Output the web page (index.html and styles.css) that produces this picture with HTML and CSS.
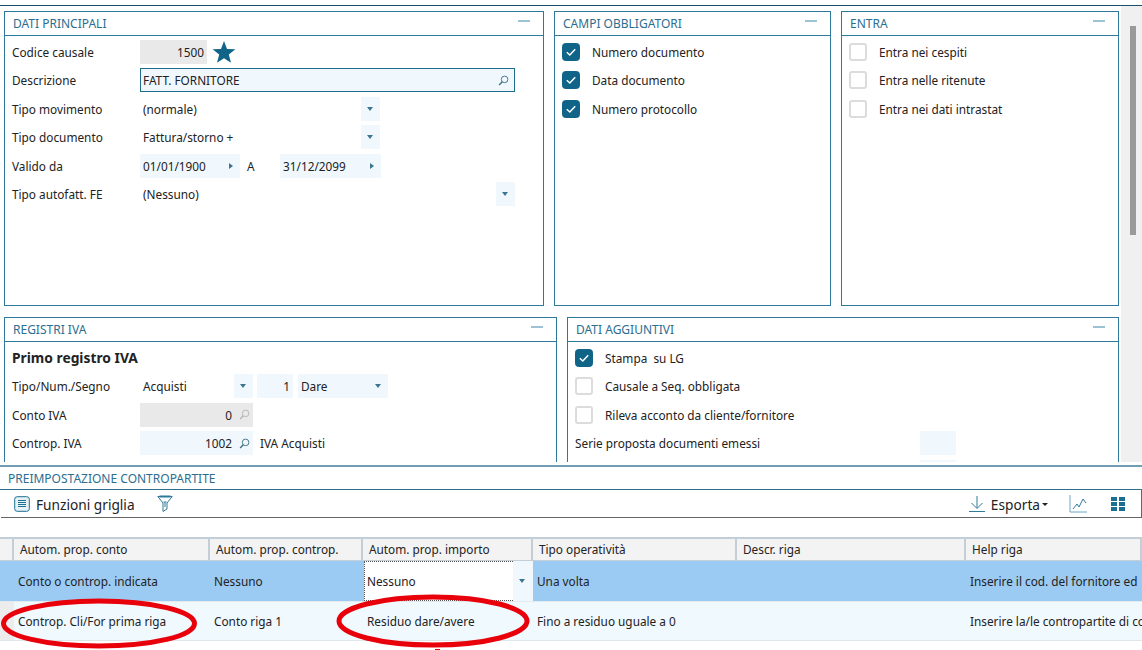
FILE: index.html
```html
<!DOCTYPE html>
<html lang="it">
<head>
<meta charset="utf-8">
<title>Causale</title>
<link rel="stylesheet" href="styles.css">
</head>
<body>
<svg class="defs" width="0" height="0" aria-hidden="true">
  <symbol id="lens" viewBox="0 0 12 12"><circle cx="7.2" cy="4.8" r="3.6" fill="none" stroke="currentColor" stroke-width="1"/><path d="M4.7 7.3 1.2 10.8" stroke="currentColor" stroke-width="1.5" fill="none"/></symbol>
  <symbol id="check" viewBox="0 0 18 18"><rect x=".5" y=".5" width="17" height="17" rx="3" fill="#0f6487" stroke="#0f6487"/><path d="M4.8 9.2 7.8 12 13.2 6.2" fill="none" stroke="#fff" stroke-width="1.5"/></symbol>
</svg>
<div class="page">
  <div class="upper">
    <div class="content">
      <div class="row-one">
        <section class="panel panel-main">
          <header class="panel-title"><span>DATI PRINCIPALI</span><i class="collapse"></i></header>
          <div class="panel-body">
            <div class="frow"><label>Codice causale</label><div class="field grey num w67">1500</div>
              <svg class="star" viewBox="0 0 24 24"><path d="M12 1 15 8.9 23.4 9.3 16.8 14.6 19 22.8 12 18.2 5 22.8 7.2 14.6 .6 9.3 9 8.9Z" fill="#0f6487"/></svg></div>
            <div class="frow"><label>Descrizione</label><div class="field focus w375"><span class="grow">FATT. FORNITORE</span><svg class="lens"><use href="#lens"/></svg></div></div>
            <div class="frow"><label>Tipo movimento</label><div class="select w240"><span class="grow">(normale)</span><b class="drop"></b></div></div>
            <div class="frow"><label>Tipo documento</label><div class="select w240"><span class="grow">Fattura/storno +</span><b class="drop"></b></div></div>
            <div class="frow"><label>Valido da</label><div class="field w100"><span class="grow">01/01/1900</span><b class="next"></b></div><span class="date-a">A</span><div class="field w101"><span class="grow">31/12/2099</span><b class="next"></b></div></div>
            <div class="frow"><label>Tipo autofatt. FE</label><div class="select w375"><span class="grow">(Nessuno)</span><b class="drop"></b></div></div>
          </div>
        </section>
        <section class="panel panel-side">
          <header class="panel-title"><span>CAMPI OBBLIGATORI</span><i class="collapse"></i></header>
          <div class="panel-body">
            <div class="frow"><svg class="cb"><use href="#check"/></svg>Numero documento</div>
            <div class="frow"><svg class="cb"><use href="#check"/></svg>Data documento</div>
            <div class="frow"><svg class="cb"><use href="#check"/></svg>Numero protocollo</div>
          </div>
        </section>
        <section class="panel panel-side wide">
          <header class="panel-title"><span>ENTRA</span><i class="collapse"></i></header>
          <div class="panel-body">
            <div class="frow"><i class="cb off"></i>Entra nei cespiti</div>
            <div class="frow"><i class="cb off"></i>Entra nelle ritenute</div>
            <div class="frow"><i class="cb off"></i>Entra nei dati intrastat</div>
          </div>
        </section>
      </div>
      <div class="row-two">
        <section class="panel panel-reg">
          <header class="panel-title"><span>REGISTRI IVA</span><i class="collapse"></i></header>
          <div class="panel-body">
            <div class="frow heading">Primo registro IVA</div>
            <div class="frow"><label>Tipo/Num./Segno</label><div class="select w113"><span class="grow">Acquisti</span><b class="drop"></b></div><div class="field num w36 gap4">1</div><div class="select filled w90 gap5"><span class="grow">Dare</span><b class="drop"></b></div></div>
            <div class="frow"><label>Conto IVA</label><div class="field grey w113"><span class="grow right">0</span><svg class="lens dim"><use href="#lens"/></svg></div></div>
            <div class="frow"><label>Controp. IVA</label><div class="field w113"><span class="grow right">1002</span><svg class="lens"><use href="#lens"/></svg></div><span class="after">IVA Acquisti</span></div>
          </div>
        </section>
        <section class="panel panel-add">
          <header class="panel-title"><span>DATI AGGIUNTIVI</span><i class="collapse"></i></header>
          <div class="panel-body">
            <div class="frow"><svg class="cb"><use href="#check"/></svg>Stampa&nbsp; su LG</div>
            <div class="frow"><i class="cb off"></i>Causale a Seq. obbligata</div>
            <div class="frow"><i class="cb off"></i>Rileva acconto da cliente/fornitore</div>
            <div class="frow"><label class="serie">Serie proposta documenti emessi</label><div class="field w36"></div></div>
            <div class="frow"><label class="serie"></label><div class="field w36"></div></div>
          </div>
        </section>
      </div>
    </div>
    <div class="scrollbar"><div class="thumb"></div></div>
  </div>
  <div class="sub-title">PREIMPOSTAZIONE CONTROPARTITE</div>
  <div class="toolbar">
    <svg class="tool-list" viewBox="0 0 16 16"><rect x=".7" y=".7" width="14.6" height="14.6" rx="2.5" fill="#e5f2f8" stroke="#1d6f91"/><path d="M4 4.5h8M4 6.5h8M4 8.5h8M4 10.5h8" stroke="#1d6f91"/></svg>
    <span class="tool-label">Funzioni griglia</span>
    <svg class="tool-filter" viewBox="0 0 16 18"><path d="M.8 1.5h14.4L10 8v6l-4 2.5V8Z" fill="none" stroke="#2f7a9b"/><path d="M2.5 1.5h11" stroke="#2f7a9b" stroke-width="2"/><path d="M6.5 7h3M8 7v5" stroke="#2f7a9b"/></svg>
    <span class="tool-space"></span>
    <svg class="tool-down" viewBox="0 0 18 18"><path d="M9 1v12M3.5 8 9 13.5 14.5 8" fill="none" stroke="#2f7a9b"/><path d="M1 16.5h16" stroke="#2f7a9b"/></svg>
    <span class="tool-label export">Esporta</span><b class="caret"></b>
    <svg class="tool-chart" viewBox="0 0 18 18"><path d="M1 0v17h17" fill="none" stroke="#6aa6c0"/><path d="M4 14 8 9 10 12 14 4 17 8" fill="none" stroke="#2f7a9b"/></svg>
    <svg class="tool-grid" viewBox="0 0 14 14"><path d="M0 0h6v4H0ZM8 0h6v4H8ZM0 5h6v4H0ZM8 5h6v4H8ZM0 10h6v4H0ZM8 10h6v4H8Z" fill="#1d6f91"/></svg>
  </div>
  <div class="grid">
    <div class="grow-row head">
      <div class="c0"></div><div>Autom. prop. conto</div><div>Autom. prop. controp.</div><div>Autom. prop. importo</div><div>Tipo operatività</div><div>Descr. riga</div><div>Help riga</div>
    </div>
    <div class="grow-row selected">
      <div class="c0"></div><div>Conto o controp. indicata</div><div>Nessuno</div><div class="editor"><span class="grow">Nessuno</span><b class="drop"></b></div><div>Una volta</div><div></div><div>Inserire il cod. del fornitore ed</div>
    </div>
    <div class="grow-row plain">
      <div class="c0"></div><div>Controp. Cli/For prima riga</div><div>Conto riga 1</div><div>Residuo dare/avere</div><div>Fino a residuo uguale a 0</div><div></div><div>Inserire la/le contropartite di co</div>
    </div>
  </div>
  <svg class="marks" viewBox="0 0 1142 650" aria-hidden="true">
    <ellipse cx="99" cy="623.5" rx="95.5" ry="22.5" fill="none" stroke="#e8000b" stroke-width="5"/>
    <ellipse cx="433" cy="621" rx="94" ry="24" fill="none" stroke="#e8000b" stroke-width="5"/>
    <path d="M435 649h5v1h-5z" fill="#e8000b"/>
  </svg>
</div>
</body>
</html>
```
FILE: styles.css
```css
* { box-sizing: border-box; }
html, body { margin: 0; padding: 0; background: #fff; }
body { font: 11.8px/16px "Noto Sans", Tahoma, sans-serif; color: #222; overflow: hidden; }
.defs { position: absolute; }
.page { position: relative; width: 1142px; height: 650px; overflow: hidden; padding-top: 5px; }

.upper { display: flex; height: 457px; border-top: 1px solid #1d5068; overflow: hidden; margin-bottom: 3px; }
.content { flex: 1; min-width: 0; padding: 5px 2px 0 4px; overflow: hidden; }
.scrollbar { width: 21px; background: #f0f0f0; padding: 20px 6px 0 9px; }
.thumb { height: 209px; background: #9a9a9a; }

.row-one { display: flex; gap: 10px; height: 295px; }
.row-two { display: flex; gap: 10px; margin-top: 11px; height: 200px; }
.panel { border: 1px solid #2f7a9b; display: flex; flex-direction: column; flex: none; }
.panel-main { width: 540px; }
.panel-side { width: 277px; }
.panel-side.wide { width: 278px; }
.panel-reg { width: 553px; }
.panel-add { width: 552px; }
.panel-title { height: 24px; flex: none; display: flex; align-items: center; justify-content: space-between; padding: 0 13px 0 8px; border-bottom: 1px solid #2f7a9b; color: #2c6e8f; font-size: 12px; }
.collapse { width: 12px; height: 2px; background: #9cc2d3; margin-bottom: 6px; }
.panel-body { padding: 1.5px 7px 0; }

.frow { height: 28.5px; display: flex; align-items: center; white-space: nowrap; }
.frow label { width: 128px; flex: none; }
.frow label.serie { width: 345px; }
.heading { font-weight: 700; font-size: 13.8px; }

.field, .select { height: 24px; display: flex; align-items: center; padding: 0 3px; background: #f0f8fe; flex: none; }
.select { background: transparent; padding-right: 0; }
.select.filled { background: #f0f8fe; }
.field.num { justify-content: flex-end; padding-right: 3px; }
.field.grey { background: #e9e9e9; }
.field.focus { background: #f0f8fe; border: 1px solid #1f6d8e; padding: 0 5px 0 2px; }
.grow { flex: 1; min-width: 0; }
.right { text-align: right; padding-right: 7px; }
.w36 { width: 36px; } .w67 { width: 67px; } .w90 { width: 90px; } .w100 { width: 100px; } .w101 { width: 101px; }
.w113 { width: 113px; } .w240 { width: 240px; } .w375 { width: 375px; }
.gap4 { margin-left: 4px; } .gap5 { margin-left: 5px; }
.date-a { width: 40px; padding-left: 7px; }
.after { margin-left: 7px; }
.star { width: 24px; height: 24px; margin-left: 5px; }
.lens { width: 11px; height: 11px; color: #3d6f85; flex: none; }
.lens.dim { color: #b5b5b5; }
.drop { width: 19px; height: 24px; flex: none; background: #f0f8fe; position: relative; }
.drop::after { content: ""; position: absolute; left: 6px; top: 10px; border: 3.5px solid transparent; border-top: 4px solid #3c7590; border-bottom: 0; }
.next { width: 8px; height: 8px; flex: none; position: relative; margin-right: 2px; }
.next::after { content: ""; position: absolute; left: 2px; top: 1px; border: 3px solid transparent; border-left: 4px solid #3c7590; border-right: 0; }
.cb { width: 18px; height: 18px; flex: none; margin: 0 12px 0 0; display: block; }
.cb.off { background: #fff; border: 2px solid #dcdcdc; border-radius: 3px; }

.sub-title { height: 25px; border-top: 2px solid #6f9db2; border-bottom: 1px solid #2f6f8c; padding: 3px 0 0 8px; color: #2c6e8f; line-height: 18px; font-size: 12px; }
.toolbar { height: 28px; display: flex; align-items: center; border-bottom: 1px solid #666; border-right: 1px solid #666; margin-left: 1px; padding-left: 13px; }
.tool-list { width: 16px; height: 16px; }
.tool-label { font-size: 13.7px; margin-left: 6px; padding-top: 2px; }
.tool-filter { width: 16px; height: 18px; margin-left: 22px; }
.tool-space { flex: 1; }
.tool-down { width: 18px; height: 18px; }
.export { margin-left: 5px; }
.caret { border: 3px solid transparent; border-top: 3px solid #222; border-bottom: 0; margin: 2px 0 0 2px; }
.tool-chart { width: 18px; height: 18px; margin-left: 21px; }
.tool-grid { width: 14px; height: 14px; margin: 0 16px 0 24px; }

.grid { margin-top: 19px; }
.grow-row { display: grid; grid-template-columns: 14px 196px 153px 170px 204px 229px 176px; white-space: nowrap; overflow: hidden; }
.grow-row > div { overflow: hidden; display: flex; align-items: center; padding: 0 0 0 4px; }
.grow-row > .c0 { padding: 0; }
.head { height: 24px; background: #f3f3f3; border-top: 2px solid #c3ced6; border-bottom: 1px solid #c3ced6; }
.head > div { border-right: 2px solid #c3ced6; padding: 0 0 1px 6px; }
.selected { height: 40px; background: #9bcbf3; }
.plain { height: 40px; background: #f0f9fe; border-top: 1px solid #e2eaf0; border-bottom: 1px solid #dfe6ea; }
.plain > .c0 { background: #ececec; }
.grow-row > .editor { background: #fff; outline: 1px dotted #555; outline-offset: -1px; margin-left: 1px; padding: 0 0 0 3px; }
.editor .drop { width: 20px; height: 100%; }
.editor .drop::after { top: 50%; margin-top: -2px; }
.marks { position: absolute; inset: 0; width: 1142px; height: 650px; pointer-events: none; }
```
